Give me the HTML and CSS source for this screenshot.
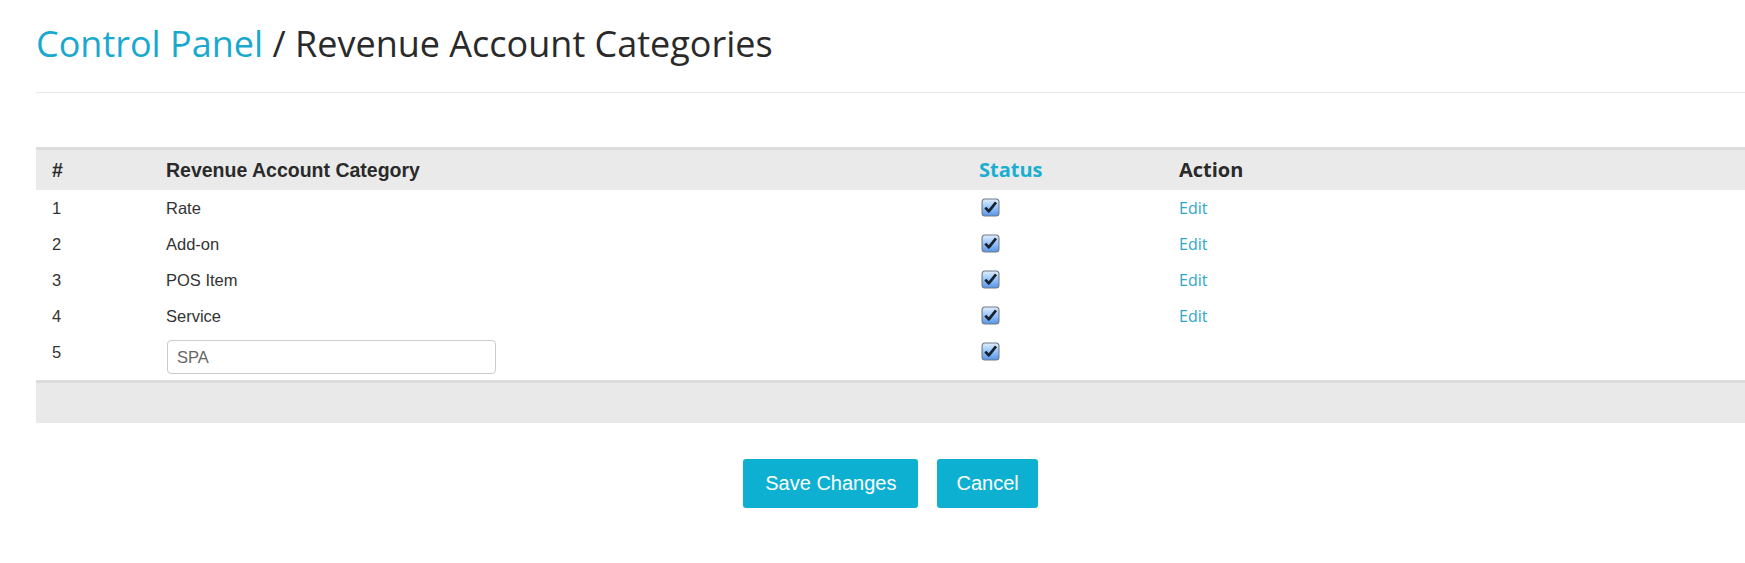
FILE: index.html
```html
<!DOCTYPE html>
<html lang="en">
<head>
<meta charset="utf-8">
<title>Revenue Account Categories</title>
<link rel="stylesheet" href="styles.css">
</head>
<body>
<svg class="defs" width="0" height="0" aria-hidden="true"><defs><linearGradient id="g1" x1="0" y1="0" x2="0" y2="1"><stop offset="0" stop-color="#dcebff"/><stop offset="0.45" stop-color="#9ec7fb"/><stop offset="1" stop-color="#5b98e8"/></linearGradient></defs></svg>
<div class="page">
  <div class="page-header">
    <h1 class="title"><a class="crumb" href="#">Control Panel</a> / Revenue Account Categories</h1>
  </div>

  <div class="table">
    <div class="row head">
      <div class="cell">#</div>
      <div class="cell">Revenue Account Category</div>
      <div class="cell os link">Status</div>
      <div class="cell os">Action</div>
    </div>

    <div class="row">
      <div class="cell">1</div>
      <div class="cell">Rate</div>
      <div class="cell status"><svg class="chk" width="19" height="19" viewBox="0 0 19 19"><rect x="0.5" y="0.5" width="18" height="18" rx="3.5" fill="#6f7a86"/><rect x="1.6" y="1.6" width="15.8" height="15.8" rx="2.5" fill="url(#g1)"/><path d="M4.3 9.6 L7.8 13.3 L15 4.4" fill="none" stroke="#17222e" stroke-width="2.7" stroke-linejoin="round"/></svg></div>
      <div class="cell os"><a class="edit" href="#">Edit</a></div>
    </div>

    <div class="row">
      <div class="cell">2</div>
      <div class="cell">Add-on</div>
      <div class="cell status"><svg class="chk" width="19" height="19" viewBox="0 0 19 19"><rect x="0.5" y="0.5" width="18" height="18" rx="3.5" fill="#6f7a86"/><rect x="1.6" y="1.6" width="15.8" height="15.8" rx="2.5" fill="url(#g1)"/><path d="M4.3 9.6 L7.8 13.3 L15 4.4" fill="none" stroke="#17222e" stroke-width="2.7" stroke-linejoin="round"/></svg></div>
      <div class="cell os"><a class="edit" href="#">Edit</a></div>
    </div>

    <div class="row">
      <div class="cell">3</div>
      <div class="cell">POS Item</div>
      <div class="cell status"><svg class="chk" width="19" height="19" viewBox="0 0 19 19"><rect x="0.5" y="0.5" width="18" height="18" rx="3.5" fill="#6f7a86"/><rect x="1.6" y="1.6" width="15.8" height="15.8" rx="2.5" fill="url(#g1)"/><path d="M4.3 9.6 L7.8 13.3 L15 4.4" fill="none" stroke="#17222e" stroke-width="2.7" stroke-linejoin="round"/></svg></div>
      <div class="cell os"><a class="edit" href="#">Edit</a></div>
    </div>

    <div class="row">
      <div class="cell">4</div>
      <div class="cell">Service</div>
      <div class="cell status"><svg class="chk" width="19" height="19" viewBox="0 0 19 19"><rect x="0.5" y="0.5" width="18" height="18" rx="3.5" fill="#6f7a86"/><rect x="1.6" y="1.6" width="15.8" height="15.8" rx="2.5" fill="url(#g1)"/><path d="M4.3 9.6 L7.8 13.3 L15 4.4" fill="none" stroke="#17222e" stroke-width="2.7" stroke-linejoin="round"/></svg></div>
      <div class="cell os"><a class="edit" href="#">Edit</a></div>
    </div>

    <div class="row">
      <div class="cell">5</div>
      <div class="cell input-cell"><input class="field" type="text" value="SPA"></div>
      <div class="cell status"><svg class="chk" width="19" height="19" viewBox="0 0 19 19"><rect x="0.5" y="0.5" width="18" height="18" rx="3.5" fill="#6f7a86"/><rect x="1.6" y="1.6" width="15.8" height="15.8" rx="2.5" fill="url(#g1)"/><path d="M4.3 9.6 L7.8 13.3 L15 4.4" fill="none" stroke="#17222e" stroke-width="2.7" stroke-linejoin="round"/></svg></div>
      <div class="cell"></div>
    </div>

    <div class="foot"></div>
  </div>

  <div class="actions">
    <button class="btn btn-wide" type="button">Save Changes</button>
    <button class="btn" type="button">Cancel</button>
  </div>
</div>
</body>
</html>
```

FILE: styles.css
```css
html, body {
  margin: 0;
  padding: 0;
  background: #ffffff;
}

body {
  font-family: "Liberation Sans", Arial, sans-serif;
  font-size: 16.5px;
  color: #333333;
}

.defs {
  position: absolute;
  width: 0;
  height: 0;
  overflow: hidden;
}

.page {
  padding-left: 36px;
}

.page-header {
  padding-top: 23px;
  padding-bottom: 28px;
  border-bottom: 1px solid #e8e8e8;
}

.title {
  margin: 0;
  font-family: "Open Sans", sans-serif;
  font-weight: 400;
  font-size: 36px;
  line-height: 41px;
  color: #2a2a2a;
  white-space: nowrap;
}

.crumb {
  color: #19a9cf;
  text-decoration: none;
}

.table {
  margin-top: 54px;
}

.row {
  display: grid;
  grid-template-columns: 114px 813px 200px 1fr;
}

.cell {
  padding: 8px 16px;
  line-height: 20px;
}

.head {
  border-top: 3px solid #dcdcdc;
  background: #eaeaea;
}

.head .cell {
  font-weight: 700;
  font-size: 19.5px;
  line-height: 24px;
  color: #2a2a2a;
}

.head .cell.os {
  font-size: 20px;
}

.os {
  font-family: "Open Sans", sans-serif;
}

.head .link {
  color: #1aaed0;
}

.status {
  padding-left: 18px;
}

.chk {
  display: block;
}

.edit {
  color: #2ea6c9;
  text-decoration: none;
  font-size: 16px;
}

.input-cell {
  padding-top: 6px;
  padding-bottom: 6px;
}

.field {
  display: block;
  box-sizing: border-box;
  width: 329px;
  height: 34px;
  margin: 0 0 0 1px;
  padding: 0 9px;
  border: 1px solid #cccccc;
  border-radius: 4px;
  font-family: "Liberation Sans", Arial, sans-serif;
  font-size: 16.5px;
  color: #666666;
  background: #ffffff;
}

.foot {
  height: 40px;
  border-top: 3px solid #dcdcdc;
  background: #e9e9e9;
}

.actions {
  display: flex;
  justify-content: center;
  gap: 19px;
  margin-top: 36px;
}

.btn {
  height: 49px;
  padding: 0 19px;
  border: 0;
  border-radius: 3px;
  background: #0eb0d2;
  color: #ffffff;
  font-family: "Liberation Sans", Arial, sans-serif;
  font-size: 20px;
  cursor: pointer;
}

.btn-wide {
  padding: 0 22px;
}
```
